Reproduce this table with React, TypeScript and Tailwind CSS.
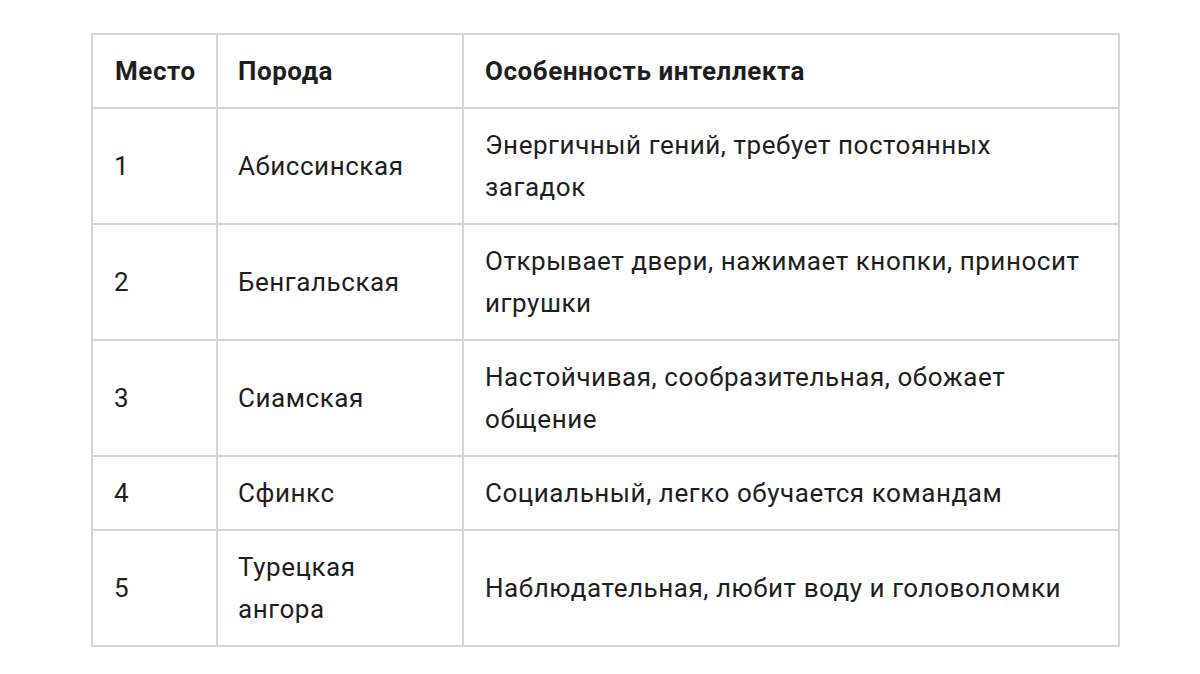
import React from "react";

const rows: [string, string, string][] = [
  ["1", "Абиссинская", "Энергичный гений, требует постоянных загадок"],
  ["2", "Бенгальская", "Открывает двери, нажимает кнопки, приносит игрушки"],
  ["3", "Сиамская", "Настойчивая, сообразительная, обожает общение"],
  ["4", "Сфинкс", "Социальный, легко обучается командам"],
  ["5", "Турецкая ангора", "Наблюдательная, любит воду и головоломки"],
];

export default function App() {
  return (
    <div
      className="w-[1200px] h-[674px] bg-white pt-[33px] pl-[91px]"
      style={{ fontFamily: "Roboto, 'Noto Sans', sans-serif" }}
    >
      <table className="border-collapse table-fixed w-[1027px] text-[26px] leading-[42px] tracking-[0.55px] text-[#1e1e1e]">
        <colgroup>
          <col className="w-[125px]" />
          <col className="w-[246px]" />
          <col className="w-[656px]" />
        </colgroup>
        <thead>
          <tr className="h-[74px]">
            <th className="border-2 border-[#d8d4d2] text-left font-bold pl-[22px] pr-[10px] align-middle">Место</th>
            <th className="border-2 border-[#d8d4d2] text-left font-bold pl-[20px] pr-[20px] align-middle">Порода</th>
            <th className="border-2 border-[#d8d4d2] text-left font-bold pl-[21px] pr-[30px] align-middle">Особенность интеллекта</th>
          </tr>
        </thead>
        <tbody>
          {rows.map((r) => (
            <tr key={r[0]}>
              <td className="border-2 border-[#d8d4d2] pl-[21px] pr-[10px] py-[15px] align-middle">{r[0]}</td>
              <td className="border-2 border-[#d8d4d2] pl-[20px] pr-[20px] py-[15px] align-middle">{r[1]}</td>
              <td className="border-2 border-[#d8d4d2] pl-[21px] pr-[30px] py-[15px] align-middle">{r[2]}</td>
            </tr>
          ))}
        </tbody>
      </table>
    </div>
  );
}
